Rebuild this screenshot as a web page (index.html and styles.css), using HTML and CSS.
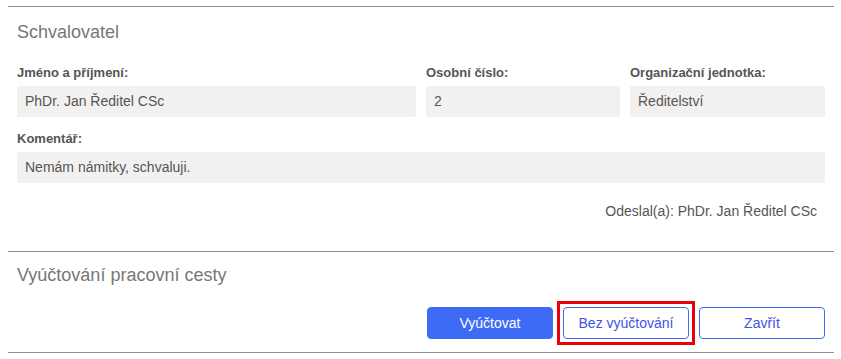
FILE: index.html
```html
<!DOCTYPE html>
<html lang="cs">
<head>
    <meta charset="UTF-8">
    <meta name="viewport" content="width=device-width, initial-scale=1.0">
    <title>Schvalovatel</title>
    <link rel="stylesheet" href="styles.css">
</head>
<body>
    <div class="page">
        <section class="panel approver">
            <h2>Schvalovatel</h2>
            <div class="row three">
                <div class="field">
                    <label>Jméno a příjmení:</label>
                    <div class="value">PhDr. Jan Ředitel CSc</div>
                </div>
                <div class="field">
                    <label>Osobní číslo:</label>
                    <div class="value">2</div>
                </div>
                <div class="field">
                    <label>Organizační jednotka:</label>
                    <div class="value">Ředitelství</div>
                </div>
            </div>
            <div class="field comment">
                <label>Komentář:</label>
                <div class="value">Nemám námitky, schvaluji.</div>
            </div>
            <p class="sent-by">Odeslal(a): PhDr. Jan Ředitel CSc</p>
        </section>
        <section class="panel billing">
            <h2>Vyúčtování pracovní cesty</h2>
            <div class="actions">
                <button class="btn primary">Vyúčtovat</button>
                <button class="btn outline highlighted">Bez vyúčtování</button>
                <button class="btn outline">Zavřít</button>
            </div>
        </section>
    </div>
</body>
</html>
```

FILE: styles.css
```css
body {
    font-family: "Liberation Sans", Arial, sans-serif;
    margin: 0;
    padding: 0;
    background-color: #fff;
    color: #555;
}

.page {
    margin: 6px 7px 0 8px;
    border-bottom: 1px solid #8e8e8e;
}

.panel {
    border-top: 1px solid #8e8e8e;
    padding: 0 9px;
}

h2 {
    font-size: 18px;
    font-weight: normal;
    line-height: 20px;
    color: #777;
    margin: 0;
}

.approver h2 {
    padding-top: 15px;
}

.billing h2 {
    padding-top: 13px;
}

.row.three {
    display: grid;
    grid-template-columns: 1fr 194px 195px;
    gap: 10px;
    margin-top: 23px;
}

.field label {
    display: block;
    font-size: 13px;
    font-weight: bold;
    line-height: 16px;
    color: #555;
    margin-bottom: 5px;
}

.field .value {
    height: 31px;
    line-height: 31px;
    padding: 0 8px;
    background-color: #f2f1f0;
    border-radius: 2px;
    font-size: 14px;
    color: #555;
}

.comment {
    margin-top: 14px;
}

.sent-by {
    margin: 20px 8px 0 0;
    text-align: right;
    font-size: 14px;
    line-height: 16px;
    padding-bottom: 32px;
}

.actions {
    display: flex;
    justify-content: flex-end;
    gap: 10px;
    margin-top: 22px;
    padding-bottom: 13px;
}

.btn {
    width: 126px;
    height: 32px;
    font-family: "Liberation Sans", Arial, sans-serif;
    font-size: 14px;
    border-radius: 4px;
    cursor: pointer;
}

.primary {
    background-color: #3e6bf5;
    border: 1px solid #3e6bf5;
    color: #fff;
}

.outline {
    background-color: #fff;
    border: 1px solid #3e6bf5;
    color: #4053e6;
}

/* red marker drawn over the button */
.highlighted {
    position: relative;
}

.highlighted::after {
    content: "";
    position: absolute;
    top: -7px;
    left: -7px;
    right: -7px;
    bottom: -7px;
    border: 3px solid #e8000b;
    pointer-events: none;
}
```
